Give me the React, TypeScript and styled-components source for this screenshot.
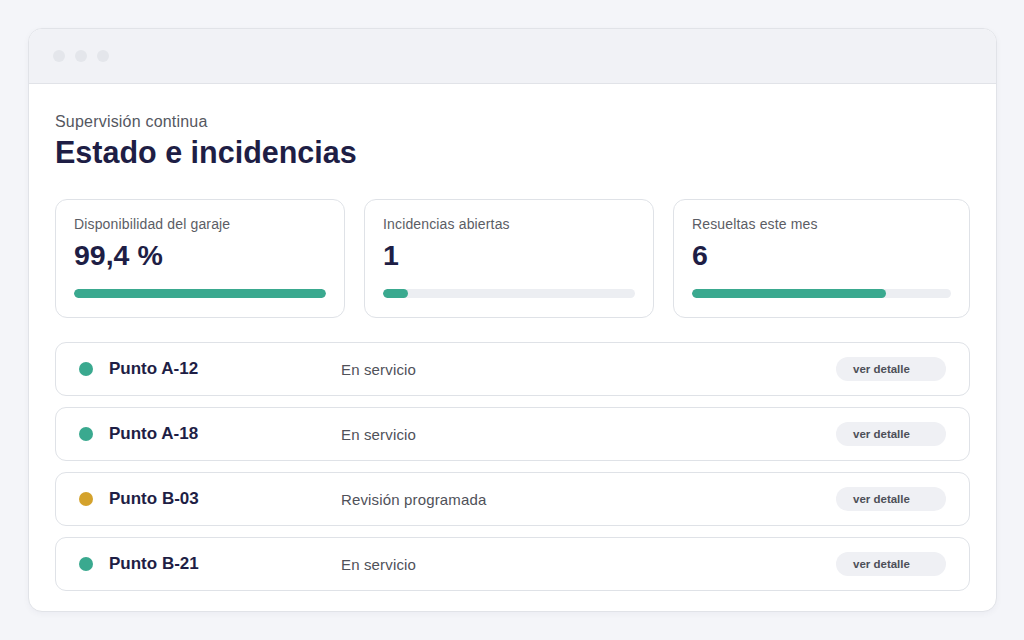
import React from "react";
import styled, { createGlobalStyle } from "styled-components";

const GlobalStyle = createGlobalStyle`
  html, body {
    margin: 0;
    padding: 0;
    background: #f4f5f9;
    font-family: "Liberation Sans", Arial, sans-serif;
  }
`;

const Page = styled.div`
  width: 1024px;
  height: 640px;
  box-sizing: border-box;
  padding: 28px 27px 0 28px;
`;

const Window = styled.div`
  width: 969px;
  height: 584px;
  box-sizing: border-box;
  border: 1px solid #e1e3e8;
  border-radius: 14px;
  background: #ffffff;
  overflow: hidden;
  display: flex;
  flex-direction: column;
  box-shadow: 0 2px 6px rgba(30, 30, 70, 0.04);
`;

const TitleBar = styled.div`
  height: 55px;
  flex-shrink: 0;
  box-sizing: border-box;
  background: #f1f2f6;
  border-bottom: 1px solid #e1e3e8;
  display: flex;
  align-items: center;
  gap: 10px;
  padding-left: 24px;
`;

const Dot = styled.span`
  width: 12px;
  height: 12px;
  border-radius: 50%;
  background: #e4e6eb;
`;

const Content = styled.div`
  padding: 28px 26px 0 26px;
  display: flex;
  flex-direction: column;
`;

const Eyebrow = styled.div`
  font-size: 16px;
  color: #55575f;
  line-height: 19px;
  letter-spacing: 0.2px;
`;

const Title = styled.h1`
  margin: 3px 0 0 0;
  font-size: 30.5px;
  line-height: 36px;
  font-weight: 700;
  color: #1e1e45;
`;

const Stats = styled.div`
  display: grid;
  grid-template-columns: 290px 290px 297px;
  gap: 19px;
  margin-top: 29px;
`;

const StatCard = styled.div`
  height: 119px;
  box-sizing: border-box;
  border: 1px solid #dfe2e7;
  border-radius: 12px;
  padding: 16px 18px 0 18px;
`;

const StatLabel = styled.div`
  font-size: 14px;
  color: #5b5d65;
  line-height: 17px;
  letter-spacing: 0.15px;
`;

const StatValue = styled.div`
  margin-top: 6px;
  font-size: 28.5px;
  font-weight: 700;
  color: #1e1e45;
  line-height: 32px;
`;

const Track = styled.div`
  margin-top: 18px;
  height: 9px;
  border-radius: 5px;
  background: #eceef2;
  overflow: hidden;
`;

const Fill = styled.div`
  height: 100%;
  border-radius: 5px;
  background: #3aa98f;
`;

const List = styled.div`
  display: flex;
  flex-direction: column;
  gap: 11px;
  margin-top: 24px;
`;

const Row = styled.div`
  height: 54px;
  box-sizing: border-box;
  border: 1px solid #dfe2e7;
  border-radius: 11px;
  display: flex;
  align-items: center;
  padding: 0 23px 0 23px;
`;

const StatusDot = styled.span<{ $color: string }>`
  width: 14px;
  height: 14px;
  border-radius: 50%;
  background: ${(p) => p.$color};
  flex-shrink: 0;
`;

const Name = styled.div`
  margin-left: 16px;
  width: 232px;
  font-size: 17px;
  font-weight: 700;
  color: #1e1e45;
`;

const Status = styled.div`
  flex: 1;
  font-size: 15px;
  color: #4f5159;
  letter-spacing: 0.15px;
`;

const DetailButton = styled.button`
  width: 110px;
  height: 24px;
  border: none;
  border-radius: 12px;
  background: #eff0f4;
  color: #4d4f58;
  font-family: "Liberation Sans", Arial, sans-serif;
  font-size: 11.5px;
  font-weight: 700;
  text-align: left;
  padding-left: 17px;
  cursor: pointer;
`;

const stats = [
  { label: "Disponibilidad del garaje", value: "99,4 %", pct: 100 },
  { label: "Incidencias abiertas", value: "1", pct: 10 },
  { label: "Resueltas este mes", value: "6", pct: 75 },
];

const points = [
  { name: "Punto A-12", status: "En servicio", color: "#3aa98f" },
  { name: "Punto A-18", status: "En servicio", color: "#3aa98f" },
  { name: "Punto B-03", status: "Revisión programada", color: "#d4a22c" },
  { name: "Punto B-21", status: "En servicio", color: "#3aa98f" },
];

export default function App() {
  return (
    <>
      <GlobalStyle />
      <Page>
        <Window>
          <TitleBar>
            <Dot />
            <Dot />
            <Dot />
          </TitleBar>
          <Content>
            <Eyebrow>Supervisión continua</Eyebrow>
            <Title>Estado e incidencias</Title>
            <Stats>
              {stats.map((s) => (
                <StatCard key={s.label}>
                  <StatLabel>{s.label}</StatLabel>
                  <StatValue>{s.value}</StatValue>
                  <Track>
                    <Fill style={{ width: `${s.pct}%` }} />
                  </Track>
                </StatCard>
              ))}
            </Stats>
            <List>
              {points.map((p) => (
                <Row key={p.name}>
                  <StatusDot $color={p.color} />
                  <Name>{p.name}</Name>
                  <Status>{p.status}</Status>
                  <DetailButton>ver detalle</DetailButton>
                </Row>
              ))}
            </List>
          </Content>
        </Window>
      </Page>
    </>
  );
}
